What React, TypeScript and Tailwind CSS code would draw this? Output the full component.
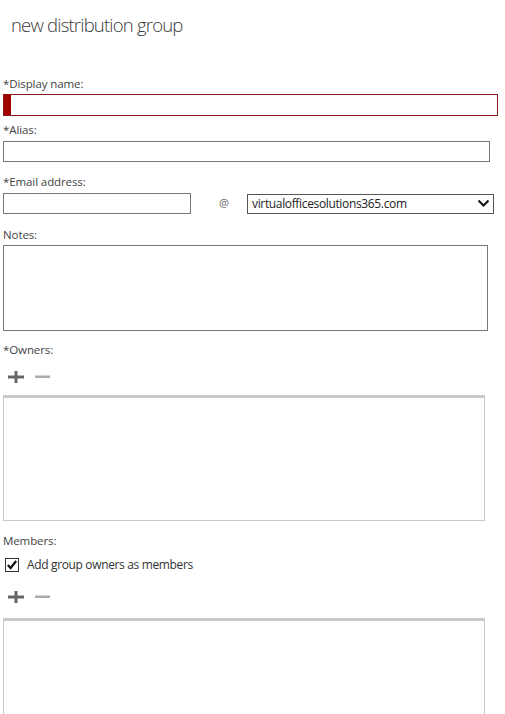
import React from "react";

const font = { fontFamily: '"Segoe UI", "Open Sans", "Noto Sans", sans-serif' };

function Label({ children, className = "" }: { children: React.ReactNode; className?: string }) {
  return <div className={`text-[11.5px] leading-[16px] text-[#444] tracking-[-0.1px] ${className}`}>{children}</div>;
}

function PlusMinus({ className = "" }: { className?: string }) {
  return (
    <div className={`flex items-center h-[16px] ${className}`}>
      <svg width="17" height="12" viewBox="0 0 17 12" className="ml-[5px]">
        <rect x="0" y="4.5" width="16" height="3" fill="#666" />
        <rect x="6.5" y="0" width="3" height="12" fill="#666" />
      </svg>
      <svg width="15" height="12" viewBox="0 0 15 12" className="ml-[10px]">
        <rect x="0" y="4.5" width="15" height="2.5" fill="#a7adad" />
      </svg>
    </div>
  );
}

export default function App() {
  return (
    <div className="w-[505px] h-[714px] bg-white overflow-hidden relative" style={font}>
      <div className="pl-[3px] flex flex-col">
        <div className="pl-[8px] pt-[13px] text-[18.5px] leading-[24px] text-[#3a3a3a] font-light tracking-[-0.8px]">
          new distribution group
        </div>

        <Label className="mt-[39px]">*Display name:</Label>
        <div className="mt-[2px] w-[495px] h-[22px] border border-[#8b1a1a] flex">
          <div className="w-[7px] h-full bg-[#a00000]" />
        </div>

        <Label className="mt-[6px]">*Alias:</Label>
        <div className="mt-[3px] w-[487px] h-[21px] border border-[#777]" />

        <Label className="mt-[12px]">*Email address:</Label>
        <div className="mt-[3px] flex items-center">
          <div className="w-[188px] h-[21px] border border-[#777]" />
          <div className="ml-[28px] w-[28px] text-[11px] text-[#666]">@</div>
          <div className="w-[247px] h-[20px] border border-[#555] flex items-center justify-between pl-[4px] pr-[3px]">
            <span className="text-[12px] leading-[16px] text-[#222] tracking-[-0.35px]">virtualofficesolutions365.com</span>
            <svg width="13" height="9" viewBox="0 0 13 9">
              <polyline points="1.5,1.5 6.5,6.5 11.5,1.5" fill="none" stroke="#111" strokeWidth="2" />
            </svg>
          </div>
        </div>

        <Label className="mt-[13px]">Notes:</Label>
        <div className="mt-[2px] w-[485px] h-[86px] border border-[#777]" />

        <Label className="mt-[11px]">*Owners:</Label>
        <PlusMinus className="mt-[11px]" />
        <div className="mt-[10px] w-[482px] h-[126px] border border-[#c6caca] border-t-[3px]" />

        <Label className="mt-[12px]">Members:</Label>
        <div className="mt-[8px] flex items-center h-[16px]">
          <svg width="14" height="14" viewBox="0 0 14 14" className="ml-[2px]">
            <rect x="0.5" y="0.5" width="13" height="13" fill="#fff" stroke="#333" />
            <polyline points="2.8,7 5.6,10 11.2,3" fill="none" stroke="#111" strokeWidth="2.2" />
          </svg>
          <span className="ml-[8px] text-[12px] leading-[16px] text-[#333] tracking-[-0.35px]">Add group owners as members</span>
        </div>
        <PlusMinus className="mt-[16px]" />
        <div className="mt-[13px] w-[482px] h-[120px] border border-[#c6caca] border-t-[3px]" />
      </div>
    </div>
  );
}
